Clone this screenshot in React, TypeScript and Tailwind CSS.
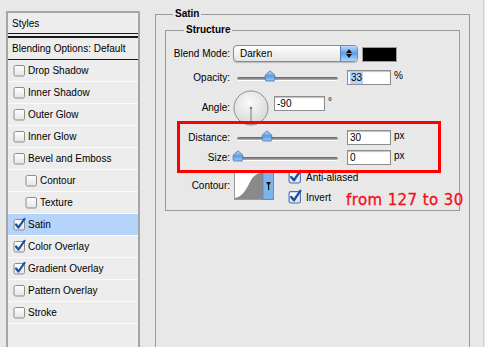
import type { ReactNode } from "react";

const styleRows = [
  { label: "Drop Shadow" },
  { label: "Inner Shadow" },
  { label: "Outer Glow" },
  { label: "Inner Glow" },
  { label: "Bevel and Emboss" },
  { label: "Contour", indent: true },
  { label: "Texture", indent: true },
  { label: "Satin", checked: true, selected: true },
  { label: "Color Overlay", checked: true },
  { label: "Gradient Overlay", checked: true },
  { label: "Pattern Overlay" },
  { label: "Stroke" },
];

function CheckBox({ checked, big }: { checked?: boolean; big?: boolean }) {
  const s = big ? 12 : 11;
  return (
    <svg width={s + 2} height={s + 2} viewBox="0 0 13 13" className="shrink-0 overflow-visible">
      <defs>
        <linearGradient id="cbg" x1="0" y1="0" x2="0" y2="1">
          <stop offset="0" stopColor="#ffffff" />
          <stop offset="1" stopColor="#e4e4e4" />
        </linearGradient>
      </defs>
      <rect x="1" y="1.5" width="10.5" height="10.5" rx="1.5" fill="url(#cbg)" stroke={big ? "#3d6fbf" : "#8c8c8c"} strokeWidth="1" />
      {checked && (
        <path d="M3 6.5 L5.5 9.5 L11.5 0.8" fill="none" stroke="#1b4fa8" strokeWidth="2.2" strokeLinecap="round" strokeLinejoin="round" />
      )}
    </svg>
  );
}

function Thumb() {
  return (
    <svg width="12" height="12" viewBox="0 0 12 12">
      <defs>
        <linearGradient id="thg" x1="0" y1="0" x2="0" y2="1">
          <stop offset="0" stopColor="#c7e0fb" />
          <stop offset="0.5" stopColor="#5a9ce8" />
          <stop offset="1" stopColor="#9fcaf7" />
        </linearGradient>
      </defs>
      <path d="M6 0.8 L10.8 5.2 V9.8 Q10.8 11 9.6 11 H2.4 Q1.2 11 1.2 9.8 V5.2 Z" fill="url(#thg)" stroke="#4a6fa5" strokeWidth="0.8" />
    </svg>
  );
}

function Slider({ at }: { at: number }) {
  return (
    <div className="relative w-[101px] h-[15px] flex items-center">
      <div className="w-full h-[4px] mt-[3px] rounded-full bg-gradient-to-b from-[#5f5f5f] to-[#b8b8b8] border-b border-white" />
      <div className="absolute top-[0px]" style={{ left: at - 6 }}>
        <Thumb />
      </div>
    </div>
  );
}

function Field({ value, w, selected }: { value: string; w: string; selected?: boolean }) {
  return (
    <div className={`${w} h-[15px] bg-white border border-[#8e8e8e] shadow-[inset_0_1px_1px_rgba(0,0,0,0.25)] pl-[2px] flex items-center`}>
      <span className={selected ? "bg-[#b4d4fd] leading-[12px] px-px" : "leading-[12px]"}>{value}</span>
    </div>
  );
}

function Label({ children }: { children: ReactNode }) {
  return <div className="w-[64px] shrink-0 text-right">{children}</div>;
}

export default function App() {
  return (
    <div className="relative w-[485px] h-[347px] overflow-hidden bg-[#e8e8e8] flex text-[10px] text-black font-['Liberation_Sans',Arial,sans-serif]">
      {/* styles list */}
      <div className="mt-[11px] ml-[6px] w-[134px] h-[360px] shrink-0 border-2 border-[#a6a6a6] bg-[#ededed]">
        <div className="h-[21px] border-b border-[#1a1a1a] pl-[4px] flex items-center">Styles</div>
        <div className="h-[4px] border-b-2 border-[#1a1a1a]" />
        <div className="h-[22px] border-b border-[#1a1a1a] pl-[4px] flex items-center">Blending Options: Default</div>
        {styleRows.map((r) => (
          <div
            key={r.label}
            className={`h-[22px] border-b border-[#fbfbfb] flex items-center gap-[2px] ${r.indent ? "pl-[17px]" : "pl-[5px]"} ${r.selected ? "bg-[#b6d4fb]" : ""}`}
          >
            <CheckBox checked={r.checked} />
            <span>{r.label}</span>
          </div>
        ))}
      </div>

      {/* satin settings */}
      <fieldset className="ml-[15px] mt-[7px] w-[315px] h-[360px] shrink-0 border border-[#9a9a9a]">
        <legend className="ml-[17px] px-[2px] font-bold leading-[14px]">Satin</legend>
        <fieldset className="mx-[9px] mt-[2px] h-[188px] border border-[#9a9a9a]">
          <legend className="ml-[18px] px-[2px] font-bold leading-[14px]">Structure</legend>
          <div className="flex flex-col">
            <div className="mt-[8px] h-[17px] flex items-center">
              <Label>Blend Mode:</Label>
              <div className="ml-[3px] w-[125px] h-[17px] rounded-[4px] border border-[#8a8a8a] bg-gradient-to-b from-white to-[#e4e4e4] flex overflow-hidden shadow-[0_1px_1px_rgba(0,0,0,0.2)]">
                <span className="flex-1 pl-[6px] leading-[15px]">Darken</span>
                <div className="w-[17px] border-l border-[#5b7fb3] bg-gradient-to-b from-[#b9d9fa] via-[#5c9de8] to-[#b0d6fc] flex flex-col items-center justify-center gap-[1px]">
                  <svg width="6" height="4" viewBox="0 0 6 4"><path d="M3 0 L6 4 H0 Z" fill="#111" /></svg>
                  <svg width="6" height="4" viewBox="0 0 6 4"><path d="M0 0 H6 L3 4 Z" fill="#111" /></svg>
                </div>
              </div>
              <div className="ml-[4px] w-[35px] h-[15px] mt-[2px] bg-black border border-[#9a9a9a]" />
            </div>

            <div className="mt-[8px] h-[15px] flex items-center">
              <Label>Opacity:</Label>
              <div className="ml-[7px]"><Slider at={33} /></div>
              <div className="ml-[9px]"><Field value="33" w="w-[44px]" selected /></div>
              <span className="ml-[3px] -mt-[4px]">%</span>
            </div>

            <div className="mt-[5px] h-[35px] flex items-center">
              <Label>Angle:</Label>
              <svg width="36" height="36" viewBox="0 0 36 36" className="ml-[3px]">
                <defs>
                  <radialGradient id="ang" cx="0.45" cy="0.35" r="0.7">
                    <stop offset="0" stopColor="#fafafa" />
                    <stop offset="1" stopColor="#d6d6d6" />
                  </radialGradient>
                </defs>
                <circle cx="18" cy="18" r="17" fill="url(#ang)" stroke="#8f8f8f" strokeWidth="1" />
                <line x1="18" y1="18" x2="18" y2="35" stroke="#7a7a7a" strokeWidth="1" />
                <circle cx="18" cy="18" r="1.3" fill="#7a7a7a" />
              </svg>
              <div className="ml-[5px] self-start mt-[6px]"><Field value="-90" w="w-[51px]" /></div>
              <span className="ml-[3px] self-start mt-[4px]">°</span>
            </div>

            <div className="mt-[5px] h-[15px] flex items-center">
              <Label>Distance:</Label>
              <div className="ml-[7px]"><Slider at={30} /></div>
              <div className="ml-[9px]"><Field value="30" w="w-[44px]" /></div>
              <span className="ml-[3px] -mt-[4px]">px</span>
            </div>

            <div className="mt-[5px] h-[15px] flex items-center">
              <Label>Size:</Label>
              <div className="ml-[7px]"><Slider at={1} /></div>
              <div className="ml-[9px]"><Field value="0" w="w-[44px]" /></div>
              <span className="ml-[3px] -mt-[4px]">px</span>
            </div>

            <div className="mt-[5px] h-[30px] flex items-center">
              <Label>Contour:</Label>
              <svg width="40" height="30" viewBox="0 0 40 30" className="ml-[4px]">
                <rect x="0.5" y="0.5" width="39" height="29" fill="#fff" stroke="#9a9a9a" />
                <path d="M1 28 C8 27 12 20 16 12 C19 6 23 3 29 2 V29 H1 Z" fill="#8a8a8a" />
                <rect x="29" y="0.5" width="10.5" height="29" fill="#7fb3ee" />
                <rect x="29" y="0.5" width="10.5" height="29" fill="none" stroke="#5b86bf" strokeWidth="0.8" />
                <path d="M32 12 H37 L34.5 16 Z" fill="#111" />
                <rect x="34" y="15" width="1.2" height="5" fill="#111" />
              </svg>
              <div className="ml-[14px] self-start flex flex-col">
                <div className="h-[14px] flex items-center gap-[4px]">
                  <CheckBox checked big />
                  <span>Anti-aliased</span>
                </div>
                <div className="mt-[6px] h-[14px] flex items-center gap-[4px]">
                  <CheckBox checked big />
                  <span>Invert</span>
                </div>
              </div>
            </div>
          </div>
        </fieldset>
      </fieldset>

      <div className="ml-[13px] w-px h-full bg-[#d2d2d2]" />

      {/* annotations */}
      <div className="absolute left-[177px] top-[121px] w-[264px] h-[52px] border-[3px] border-[#ff0000]" />
      <div className="absolute left-[346px] top-[189px] text-[15px] tracking-[0.4px] text-[#f2101a] font-['DejaVu_Sans',sans-serif] [-webkit-text-stroke:0.3px_#f2101a]">
        from 127 to 30
      </div>
    </div>
  );
}
